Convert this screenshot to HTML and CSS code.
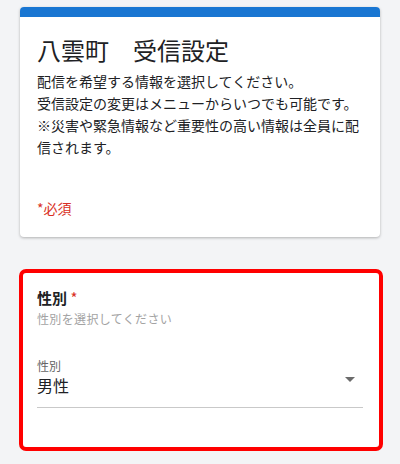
FILE: index.html
```html
<!DOCTYPE html>
<html lang="ja">
<head>
<meta charset="utf-8">
<title>八雲町 受信設定</title>
<link rel="stylesheet" href="styles.css">
</head>
<body>
<main class="page">
  <section class="card header-card">
    <div class="accent"></div>
    <div class="header-body">
      <h1 class="title">八雲町　受信設定</h1>
      <p class="desc">配信を希望する情報を選択してください。<br>受信設定の変更はメニューからいつでも可能です。<br>※災害や緊急情報など重要性の高い情報は全員に配信されます。</p>
      <p class="required-note">*必須</p>
    </div>
  </section>

  <section class="card question error">
    <div class="q-title">性別 <span class="star">*</span></div>
    <div class="q-hint">性別を選択してください</div>
    <div class="select">
      <div class="select-text">
        <div class="select-label">性別</div>
        <div class="select-value">男性</div>
      </div>
      <svg class="select-arrow" width="24" height="24" viewBox="0 0 24 24" aria-hidden="true"><path d="M7 10l5 5 5-5z" fill="#6b6b6b"/></svg>
    </div>
  </section>
</main>
</body>
</html>
```

FILE: styles.css
```css
html, body {
  margin: 0;
  padding: 0;
}
body {
  background: #f3f4f6;
  font-family: "Noto Sans CJK JP", "Noto Sans", sans-serif;
  color: #202124;
}
.page {
  padding: 7px 20px 0;
}
.card {
  background: #fff;
  border-radius: 4px;
}
.header-card {
  box-shadow: 0 1px 3px rgba(0, 0, 0, 0.28);
  overflow: hidden;
}
.accent {
  height: 10px;
  background: #1976d2;
}
.header-body {
  padding: 17px 17px 19px;
}
.title {
  margin: 0 0 4px;
  font-size: 24px;
  line-height: 32px;
  font-weight: 400;
}
.desc {
  margin: 0;
  font-size: 14px;
  line-height: 22px;
}
.required-note {
  margin: 40px 0 0;
  font-size: 14px;
  line-height: 20px;
  color: #d93025;
}
.question {
  margin: 32px -3px 0 -1px;
  padding: 15px 16px 39px 14px;
}
.question.error {
  border: 4px solid #ff0000;
  border-radius: 7px;
}
.q-title {
  font-size: 15px;
  line-height: 20px;
  font-weight: 700;
}
.star {
  color: #d93025;
  font-weight: 400;
}
.q-hint {
  margin-top: 3px;
  font-size: 12px;
  line-height: 16px;
  letter-spacing: 0.35px;
  color: #a3a3a3;
}
.select {
  margin-top: 31px;
  display: flex;
  align-items: center;
  justify-content: space-between;
  padding-bottom: 11px;
  border-bottom: 1px solid #c9c9c9;
}
.select-label {
  font-size: 12px;
  line-height: 16px;
  color: #666;
}
.select-value {
  font-size: 16px;
  line-height: 22px;
}
.select-arrow {
  display: block;
  margin: 3px 1px 0 0;
}
```
